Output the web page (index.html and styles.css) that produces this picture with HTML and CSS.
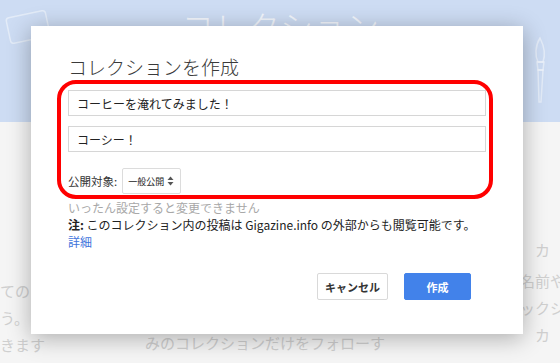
FILE: index.html
```html
<!DOCTYPE html>
<html>
<head>
  <title>コレクションを作成</title>
  <link rel="stylesheet" href="styles.css">
</head>
<body>
  <!-- Page behind the dialog -->
  <div class="page">
    <header class="band">
      <svg class="deco deco-left" width="120" height="70" viewBox="0 0 120 70">
        <rect x="8" y="10" width="40" height="26" rx="3" transform="rotate(-12 28 23)" />
        <rect x="55" y="30" width="34" height="22" rx="3" transform="rotate(18 72 41)" />
      </svg>
      <div class="band-title">コレクション</div>
      <svg class="deco deco-brush" width="24" height="70" viewBox="0 0 24 70">
        <path d="M12 2 C7 10 7 20 10 26 L15 26 C18 18 16 10 12 2 Z" />
        <path d="M9 26 L16 26 L15 34 L10 34 Z" />
        <path d="M10 34 L15 34 L13 66 L11 66 Z" />
      </svg>
    </header>
    <div class="behind">
      <div class="col col-left">
        <p>ての</p>
        <p>う。</p>
        <p>きます</p>
      </div>
      <div class="col col-mid">
        <p>みのコレクションだけをフォローす</p>
      </div>
      <div class="col col-right">
        <p>　カ</p>
        <p>名前や</p>
        <p>ックシ</p>
        <p>　カ</p>
      </div>
    </div>
  </div>

  <!-- Create collection dialog -->
  <div class="dialog">
    <h1 class="dialog-title">コレクションを作成</h1>
    <div class="fields">
      <div class="field">コーヒーを淹れてみました！</div>
      <div class="field">コーシー！</div>
    </div>
    <div class="audience">
      <span class="audience-label">公開対象:</span>
      <div class="select">
        <span>一般公開</span>
        <svg width="7" height="10" viewBox="0 0 7 10">
          <path d="M3.5 0.5 L6.5 4 L0.5 4 Z" fill="#555" />
          <path d="M3.5 9.5 L6.5 6 L0.5 6 Z" fill="#555" />
        </svg>
      </div>
    </div>
    <p class="hint">いったん設定すると変更できません</p>
    <p class="note"><b>注:</b> このコレクション内の投稿は Gigazine.info の外部からも閲覧可能です。</p>
    <a class="more" href="#">詳細</a>
    <div class="actions">
      <button class="btn btn-cancel">キャンセル</button>
      <button class="btn btn-create">作成</button>
    </div>
    <!-- red annotation frame -->
    <div class="highlight"></div>
  </div>
</body>
</html>
```

FILE: styles.css
```css
html, body {
  margin: 0;
  padding: 0;
}

body {
  width: 560px;
  height: 363px;
  overflow: hidden;
  position: relative;
  font-family: "Noto Sans CJK JP", "Noto Sans", sans-serif;
  color: #222;
  background-color: #f5f5f5;
}

/* Page behind */
.page {
  height: 100%;
  overflow: hidden;
}

.band {
  height: 122px;
  background-color: #cddcf3;
  position: relative;
  display: flex;
  justify-content: center;
}

.band-title {
  margin-top: 4px;
  font-size: 33px;
  font-weight: 300;
  color: rgba(255, 255, 255, 0.75);
  line-height: 44px;
}

.deco {
  position: absolute;
  fill: none;
  stroke: rgba(255, 255, 255, 0.45);
  stroke-width: 1.5;
}

.deco-left {
  left: 0;
  top: 4px;
}

.deco-brush {
  right: 8px;
  top: 36px;
}

.behind {
  display: grid;
  grid-template-columns: 145px 1fr 40px;
  font-size: 15px;
  color: #cfcfcf;
  line-height: 27px;
}

.behind p {
  margin: 0;
  white-space: nowrap;
}

.col-left {
  padding-top: 155px;
}

.col-mid {
  padding-top: 207px;
}

.col-right {
  padding-top: 114px;
}

.col-right p:nth-child(2) {
  margin-top: 4px;
}

/* Dialog */
.dialog {
  position: absolute;
  left: 31px;
  top: 26px;
  width: 492px;
  height: 308px;
  box-sizing: border-box;
  padding: 29px 37px 0;
  background-color: #fff;
  box-shadow: 0 4px 22px rgba(0, 0, 0, 0.3);
}

.dialog-title {
  margin: 0 0 11px;
  font-size: 19px;
  font-weight: 300;
  line-height: 24px;
  color: #3a3a3a;
}

.fields {
  display: flex;
  flex-direction: column;
  gap: 10px;
}

.field {
  height: 26px;
  box-sizing: border-box;
  border: 1px solid #d6d6d6;
  padding: 0 8px;
  display: flex;
  align-items: center;
  font-size: 12px;
}

.audience {
  margin-top: 16px;
  display: flex;
  align-items: center;
  gap: 5px;
  font-size: 11.5px;
  color: #333;
}

.select {
  width: 59px;
  height: 26px;
  box-sizing: border-box;
  border: 1px solid #dcdcdc;
  border-radius: 2px;
  padding: 0 6px 0 5px;
  display: flex;
  align-items: center;
  justify-content: space-between;
  font-size: 9px;
  white-space: nowrap;
  color: #222;
}

.hint,
.note {
  margin: 0;
  font-size: 12px;
  line-height: 17px;
}

.hint {
  margin-top: 5px;
  color: #a8a8a8;
}

.note b {
  font-weight: 700;
}

.more {
  display: block;
  font-size: 12px;
  line-height: 17px;
  color: #3f74dc;
  text-decoration: none;
}

.actions {
  margin-top: 23px;
  padding-right: 15px;
  display: flex;
  justify-content: flex-end;
  gap: 16px;
}

.btn {
  height: 27px;
  box-sizing: border-box;
  font-family: inherit;
  font-size: 11px;
  font-weight: 700;
  border-radius: 2px;
  padding: 0;
}

.btn-cancel {
  width: 71px;
  background-color: #fff;
  border: 1px solid #d9d9d9;
  color: #333;
}

.btn-create {
  width: 67px;
  background-color: #4282ea;
  border: 1px solid #4282ea;
  color: #fff;
}

.highlight {
  position: absolute;
  left: 26px;
  top: 54px;
  width: 436px;
  height: 119px;
  box-sizing: border-box;
  border: 4px solid #ff0000;
  border-radius: 19px;
  pointer-events: none;
}
```
